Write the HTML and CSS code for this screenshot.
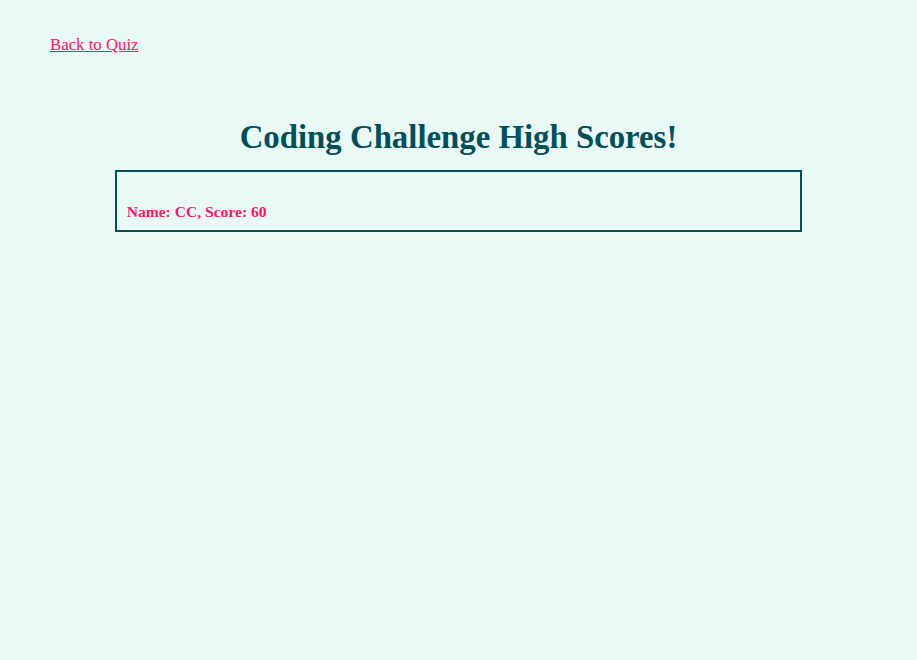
FILE: index.html
```html
<!DOCTYPE html>
<html lang="en">
<head>
<meta charset="utf-8">
<title>High Scores</title>
<link rel="stylesheet" href="styles.css">
</head>
<body>
<main class="page">
  <nav class="top-nav">
    <a class="back-link" href="#">Back to Quiz</a>
  </nav>
  <h1 class="title">Coding Challenge High Scores!</h1>
  <section class="scores">
    <ol class="score-list">
      <li class="score-item">Name: CC, Score: 60</li>
    </ol>
  </section>
</main>
</body>
</html>
```
FILE: styles.css
```css
html, body {
  margin: 0;
  padding: 0;
  height: 100%;
}
body {
  background: #e9f9f6;
  font-family: "Liberation Serif", "Times New Roman", serif;
}
.page {
  padding: 35px 0 0 0;
}
.top-nav {
  padding-left: 50px;
  height: 20px;
}
.back-link {
  color: #ff1468;
  font-size: 16.8px;
  line-height: 20px;
  text-decoration: underline;
}
.title {
  margin: 64px 0 0 0;
  text-align: center;
  font-size: 32.8px;
  font-weight: bold;
  color: #034f59;
  line-height: 36px;
}
.scores {
  width: 75%;
  margin: 15px auto 0;
  box-sizing: border-box;
  border: 2px solid #034f59;
  height: 62px;
  padding: 30px 10px 0;
}
.score-list {
  list-style: none;
  margin: 0;
  padding: 0;
}
.score-item {
  color: #ff1468;
  font-size: 15.6px;
  font-weight: bold;
  line-height: 20px;
}
```
